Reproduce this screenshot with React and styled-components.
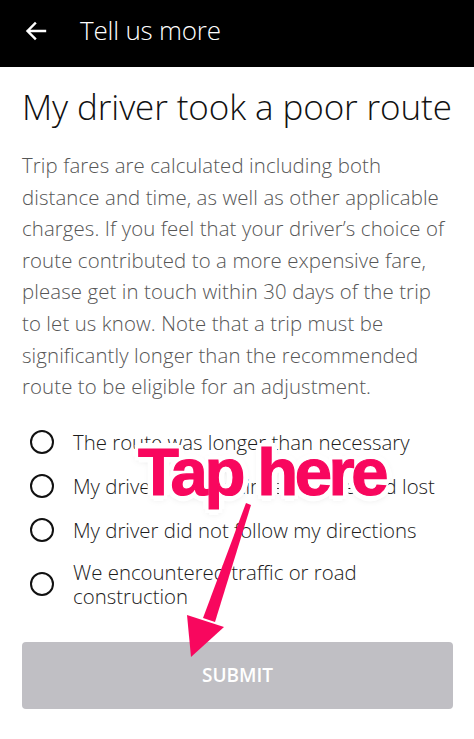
import React from "react";
import styled, { createGlobalStyle } from "styled-components";

const GlobalStyle = createGlobalStyle`
  html, body {
    margin: 0;
    padding: 0;
    background: #ffffff;
  }
  body {
    font-family: "Open Sans", "Noto Sans", sans-serif;
  }
`;

// the explainer copy, broken the way the app lays it out
const explainer = [
  "Trip fares are calculated including both",
  "distance and time, as well as other applicable",
  "charges. If you feel that your driver’s choice of",
  "route contributed to a more expensive fare,",
  "please get in touch within 30 days of the trip",
  "to let us know. Note that a trip must be",
  "significantly longer than the recommended",
  "route to be eligible for an adjustment.",
];

const reasons = [
  "The route was longer than necessary",
  "My driver went in circles or seemed lost",
  "My driver did not follow my directions",
  "We encountered traffic or road construction",
];

const App = () => {
  return (
    <Screen>
      <GlobalStyle />
      <TopBar>
        <BackButton aria-label="Back">
          <svg width="24" height="24" viewBox="0 0 24 24" fill="none">
            <path
              d="M21 12H4M11 4.5L3.5 12L11 19.5"
              stroke="#fff"
              strokeWidth="2.4"
              strokeLinecap="square"
            />
          </svg>
        </BackButton>
        <BarTitle>Tell us more</BarTitle>
      </TopBar>

      <Content>
        <Heading>My driver took a poor route</Heading>
        <Body>
          {explainer.map((line) => (
            <Line key={line}>{line}</Line>
          ))}
        </Body>

        <Options>
          {reasons.map((r) => (
            <Option key={r}>
              <Radio />
              <OptionText>{r}</OptionText>
            </Option>
          ))}
        </Options>

        <SubmitButton disabled>SUBMIT</SubmitButton>
      </Content>

      <Callout>Tap here</Callout>
      <Pointer width="474" height="739" viewBox="0 0 474 739">
        <polygon points="246,503 251,505 215,622 203,618" fill="#f8075e" />
        <polygon points="187,615 224,627 191,657" fill="#f8075e" />
      </Pointer>
    </Screen>
  );
};

const Screen = styled.div`
  position: relative;
  width: 474px;
  min-height: 739px;
  overflow: hidden;
`;

const TopBar = styled.header`
  height: 67px;
  background: #000;
  display: flex;
  align-items: center;
  padding: 0 0 8px 24px;
  box-sizing: border-box;
`;

const BackButton = styled.button`
  background: none;
  border: 0;
  padding: 0;
  display: flex;
  margin: 2px 32px 0 0;
`;

const BarTitle = styled.h1`
  margin: 0;
  color: #fff;
  font-size: 26px;
  font-weight: 300;
  letter-spacing: -0.2px;
`;

const Content = styled.main`
  padding: 18px 21px 0 22px;
`;

const Heading = styled.h2`
  margin: 0 0 21px;
  font-size: 35px;
  line-height: 44px;
  font-weight: 300;
  color: #111;
  letter-spacing: -0.1px;
  white-space: nowrap;
`;

const Body = styled.p`
  margin: 0;
  font-size: 20.4px;
  line-height: 31.6px;
  font-weight: 300;
  color: #565656;
  letter-spacing: 0.1px;
`;

const Line = styled.span`
  display: block;
  white-space: nowrap;
`;

const Options = styled.ul`
  list-style: none;
  margin: 25px 0 0;
  padding: 0 0 0 8px;
  display: flex;
  flex-direction: column;
  gap: 15px;
`;

const Option = styled.li`
  display: flex;
  align-items: center;
  min-height: 29px;
`;

const Radio = styled.span`
  flex: none;
  width: 20px;
  height: 20px;
  border: 2.5px solid #111;
  border-radius: 50%;
  margin-right: 19px;
`;

const OptionText = styled.span`
  font-size: 20.4px;
  line-height: 24px;
  font-weight: 300;
  color: #1c1c1c;
`;

const SubmitButton = styled.button`
  display: block;
  width: 100%;
  height: 67px;
  margin-top: 34px;
  border: 0;
  border-radius: 4px;
  background: #c0bfc4;
  color: #fff;
  font-family: "Open Sans", sans-serif;
  font-size: 19px;
  font-weight: 600;
`;

const Callout = styled.div`
  position: absolute;
  left: 138px;
  top: 434px;
  font-family: "Liberation Sans", Arial, sans-serif;
  font-weight: 700;
  font-size: 67px;
  line-height: 76px;
  letter-spacing: -3.4px;
  color: #f8075e;
  -webkit-text-stroke: 1.2px #f8075e;
  text-shadow:
    0 0 2px #fff,
    3px 0 0 #fff, -3px 0 0 #fff, 0 3px 0 #fff, 0 -3px 0 #fff,
    4px 4px 0 #fff, -4px 4px 0 #fff, 4px -4px 0 #fff, -4px -4px 0 #fff,
    6px 0 0 #fff, -6px 0 0 #fff, 0 6px 0 #fff, 0 -6px 0 #fff,
    0 2px 8px rgba(0, 0, 0, 0.25);
`;

const Pointer = styled.svg`
  position: absolute;
  left: 0;
  top: 0;
  pointer-events: none;
`;

export default App;
